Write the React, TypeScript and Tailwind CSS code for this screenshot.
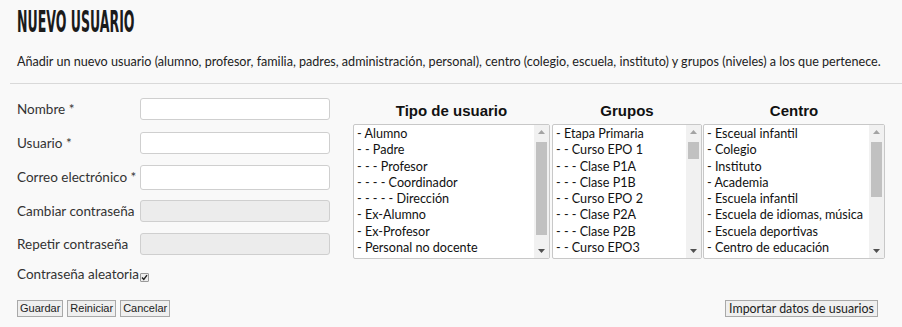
import * as React from "react";

const TIPOS = [
  "- Alumno",
  "- - Padre",
  "- - - Profesor",
  "- - - - Coordinador",
  "- - - - - Dirección",
  "- Ex-Alumno",
  "- Ex-Profesor",
  "- Personal no docente",
];

const GRUPOS = [
  "- Etapa Primaria",
  "- - Curso EPO 1",
  "- - - Clase P1A",
  "- - - Clase P1B",
  "- - Curso EPO 2",
  "- - - Clase P2A",
  "- - - Clase P2B",
  "- - Curso EPO3",
];

const CENTROS = [
  "- Esceual infantil",
  "- Colegio",
  "- Instituto",
  "- Academia",
  "- Escuela infantil",
  "- Escuela de idiomas, música",
  "- Escuela deportivas",
  "- Centro de educación",
];

function Field({ label, disabled, tall, className }: { label: string; disabled?: boolean; tall?: boolean; className?: string }) {
  return (
    <div className={"flex items-center " + (className || "")}>
      <label className="w-[123px] shrink-0 whitespace-nowrap text-[13.5px] text-[#333]">{label}</label>
      <div
        className={
          "w-[190px] rounded-[3px] border border-[#cfcfcf] " +
          (tall ? "h-[25px] " : "h-[22px] ") +
          (disabled ? "bg-[#ececec]" : "bg-white")
        }
      />
    </div>
  );
}

function ListBox({
  title,
  items,
  width,
  thumbHeight,
}: {
  title: string;
  items: string[];
  width: string;
  thumbHeight: string;
}) {
  return (
    <div className={"flex shrink-0 flex-col " + width}>
      <div className="h-[26px] text-center font-['Liberation_Sans',Arial,sans-serif] text-[15px] font-bold leading-[26px] text-[#111]">
        {title}
      </div>
      <div className="flex h-[135px] rounded-[2px] border border-[#c8c8c8] bg-white">
        <ul className="min-w-0 flex-1 overflow-hidden pl-[3px] pt-[1px] text-[12.6px] leading-[16.3px] text-[#111]">
          {items.map((it) => (
            <li key={it} className="whitespace-nowrap">
              {it}
            </li>
          ))}
        </ul>
        <div className="relative w-[15px] shrink-0 bg-[#f1f1f1]">
          <svg className="absolute left-[4px] top-[5px]" width="7" height="4" viewBox="0 0 7 4">
            <path d="M0 4 L3.5 0 L7 4 Z" fill="#a3a3a3" />
          </svg>
          <div className={"absolute left-[2px] top-[17px] w-[11px] bg-[#c1c1c1] " + thumbHeight} />
          <svg className="absolute bottom-[5px] left-[4px]" width="7" height="4" viewBox="0 0 7 4">
            <path d="M0 0 L3.5 4 L7 0 Z" fill="#505050" />
          </svg>
        </div>
      </div>
    </div>
  );
}

function Btn({ children }: { children: React.ReactNode }) {
  return (
    <button className="h-[17px] border border-[#a9a9a9] bg-[#efefef] px-[2px] font-['Liberation_Sans',Arial,sans-serif] text-[11px] leading-[15px] text-[#222]">
      {children}
    </button>
  );
}

export default function App() {
  return (
    <div className="h-[327px] w-[902px] overflow-hidden bg-[#f9f9f9] font-['Lato',sans-serif]">
      <div className="pl-[17px] pt-[6px]">
        <h1 className="inline-block origin-left scale-x-[0.45] whitespace-nowrap font-['DejaVu_Sans_Condensed','DejaVu_Sans',sans-serif] text-[31px] font-bold leading-[30px] text-[#1b1b1b]">
          NUEVO USUARIO
        </h1>
        <p className="mt-[15px] whitespace-nowrap text-[12.6px] leading-[18px] text-[#222]">
          Añadir un nuevo usuario (alumno, profesor, familia, padres, administración, personal), centro (colegio, escuela, instituto) y grupos (niveles) a los que pertenece.
        </p>
      </div>
      <div className="ml-[10px] mt-[12px] h-px bg-[#d9d9d9]" />

      <div className="flex pl-[17px] pt-[14px]">
        <div className="flex w-[336px] shrink-0 flex-col">
          <Field label="Nombre *" />
          <Field label="Usuario *" className="mt-[12px]" />
          <Field label="Correo electrónico *" tall className="mt-[11px]" />
          <Field label="Cambiar contraseña" disabled className="mt-[10px]" />
          <Field label="Repetir contraseña" disabled className="mt-[11px]" />
          <div className="mt-[9px] flex items-center text-[13.5px] text-[#333]">
            Contraseña aleatoria
            <span className="ml-[1px] mt-[6px] flex h-[9px] w-[9px] items-center justify-center rounded-[1px] border border-[#9a9a9a] bg-[#eee]">
              <svg width="7" height="7" viewBox="0 0 7 7">
                <path d="M1 3.5 L2.8 5.5 L6 1.2" stroke="#222" strokeWidth="1.4" fill="none" />
              </svg>
            </span>
          </div>
        </div>
        <div className="flex">
          <ListBox title="Tipo de usuario" items={TIPOS} width="w-[197px]" thumbHeight="h-[93px]" />
          <div className="w-[2px]" />
          <ListBox title="Grupos" items={GRUPOS} width="w-[150px]" thumbHeight="h-[17px]" />
          <div className="w-[1px]" />
          <ListBox title="Centro" items={CENTROS} width="w-[182px]" thumbHeight="h-[55px]" />
        </div>
      </div>

      <div className="flex items-center justify-between pl-[17px] pr-[24px] pt-[16px]">
        <div className="flex gap-[4px]">
          <Btn>Guardar</Btn>
          <Btn>Reiniciar</Btn>
          <Btn>Cancelar</Btn>
        </div>
        <button className="h-[17px] border border-[#a9a9a9] bg-[#efefef] px-[3px] text-[12.4px] leading-[15px] text-[#222]">
          Importar datos de usuarios
        </button>
      </div>
    </div>
  );
}
